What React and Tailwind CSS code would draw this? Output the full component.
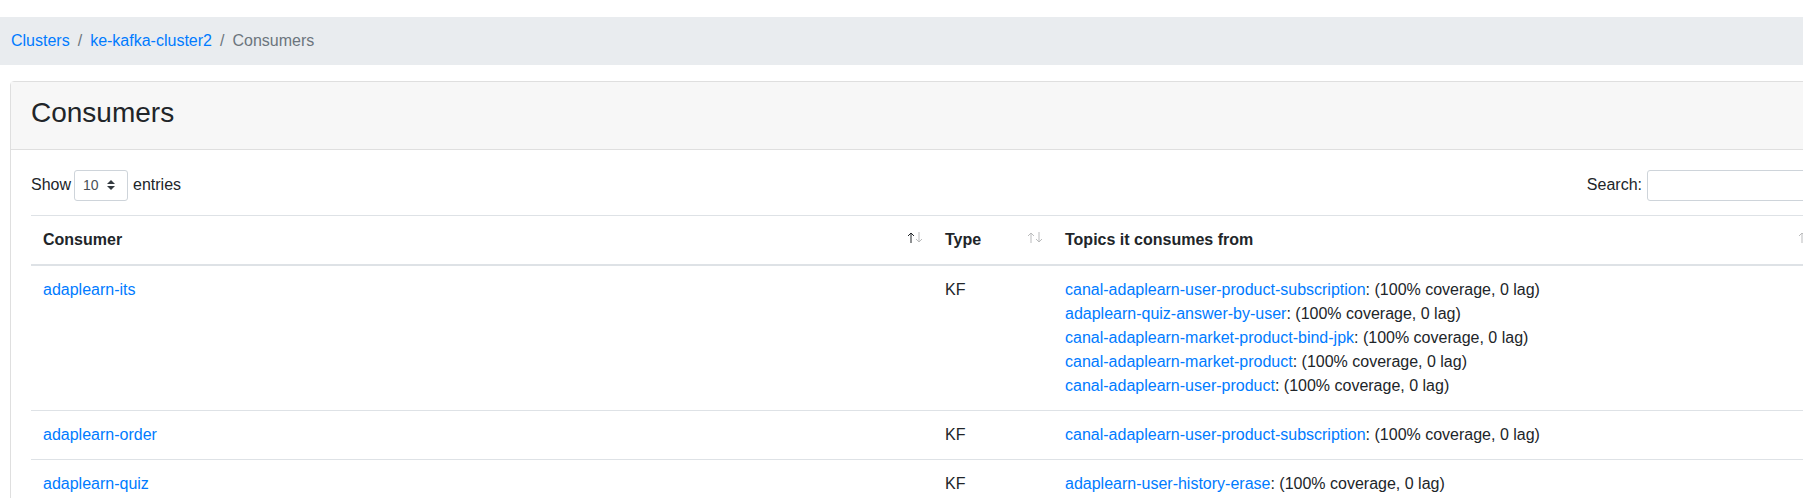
import React from "react";

const font = "font-['Liberation_Sans','Segoe_UI',Arial,sans-serif]";

function Arrow({ up, dim }) {
  return (
    <svg width="8" height="11" viewBox="0 0 8 11" className={dim ? "opacity-30" : ""}>
      {up ? (
        <path d="M4 1V11M1 4L4 1L7 4" stroke="#212529" strokeWidth="1" fill="none" />
      ) : (
        <path d="M4 0V10M1 7L4 10L7 7" stroke="#212529" strokeWidth="1" fill="none" />
      )}
    </svg>
  );
}

function SortIcon({ active }) {
  return (
    <span className="flex items-end mr-[10px] mb-[9px] shrink-0">
      <Arrow up dim={!active} />
      <Arrow dim />
    </span>
  );
}

function Topic({ name }) {
  return (
    <div>
      <a className="text-[#007bff]" href="#">{name}</a>
      <span>: (100% coverage, 0 lag)</span>
    </div>
  );
}

const rows = [
  {
    name: "adaplearn-its",
    type: "KF",
    topics: [
      "canal-adaplearn-user-product-subscription",
      "adaplearn-quiz-answer-by-user",
      "canal-adaplearn-market-product-bind-jpk",
      "canal-adaplearn-market-product",
      "canal-adaplearn-user-product",
    ],
  },
  { name: "adaplearn-order", type: "KF", topics: ["canal-adaplearn-user-product-subscription"] },
  { name: "adaplearn-quiz", type: "KF", topics: ["adaplearn-user-history-erase"] },
];

export default function App() {
  return (
    <div className={`w-[1803px] h-[498px] overflow-hidden bg-white text-[16px] leading-6 text-[#212529] ${font}`}>
      <div className="w-[1855px] pt-[17px]">
        <nav className="h-[48px] bg-[#e9ecef] flex items-center pl-[11px] mb-4">
          <a href="#" className="text-[#007bff]">Clusters</a>
          <span className="text-[#6c757d] px-2">/</span>
          <a href="#" className="text-[#007bff]">ke-kafka-cluster2</a>
          <span className="text-[#6c757d] px-2">/</span>
          <span className="text-[#6c757d]">Consumers</span>
        </nav>

        <div className="mx-[10px] border border-[#dfdfdf] rounded-[4px] bg-white">
          <div className="bg-[#f7f7f7] border-b border-[#dfdfdf] px-5 pt-[14px] pb-[11px]">
            <h3 className="text-[28px] leading-[1.2] font-normal mb-2 text-[#212529]">Consumers</h3>
          </div>
          <div className="px-5 pt-5">
            <div className="flex justify-between items-start h-[45px]">
              <div className="flex items-center h-[31px]">
                <span>Show</span>
                <div className="ml-[3px] mr-[5px] w-[54px] h-[31px] border border-[#ced4da] rounded-[3px] flex items-center pl-2 pr-3 justify-between text-[14px] text-[#495057]">
                  <span>10</span>
                  <svg width="8" height="10" viewBox="0 0 4 5">
                    <path fill="#343a40" d="M2 0L0 2h4zm0 5L0 3h4z" />
                  </svg>
                </div>
                <span>entries</span>
              </div>
              <div className="flex items-center h-[31px]">
                <span>Search:</span>
                <div className="ml-[5px] w-[177px] h-[31px] border border-[#ced4da] rounded-[3px]"></div>
              </div>
            </div>
            <table className="w-[1793px] table-fixed border-collapse">
              <colgroup>
                <col className="w-[902px]" />
                <col className="w-[120px]" />
                <col />
              </colgroup>
              <thead>
                <tr>
                  <th className="border-t border-b-2 border-[#dee2e6] p-0 text-left align-bottom font-bold">
                    <div className="flex items-end pl-3 pt-3 pb-3">
                      <span className="flex-1">Consumer</span>
                      <SortIcon active />
                    </div>
                  </th>
                  <th className="border-t border-b-2 border-[#dee2e6] p-0 text-left align-bottom font-bold">
                    <div className="flex items-end pl-3 pt-3 pb-3">
                      <span className="flex-1">Type</span>
                      <SortIcon />
                    </div>
                  </th>
                  <th className="border-t border-b-2 border-[#dee2e6] p-0 text-left align-bottom font-bold">
                    <div className="flex items-end pl-3 pt-3 pb-3">
                      <span className="flex-1">Topics it consumes from</span>
                      <SortIcon />
                    </div>
                  </th>
                </tr>
              </thead>
              <tbody>
                {rows.map((r) => (
                  <tr key={r.name}>
                    <td className="border-t border-[#dee2e6] p-3 align-top">
                      <a href="#" className="text-[#007bff]">{r.name}</a>
                    </td>
                    <td className="border-t border-[#dee2e6] p-3 align-top">{r.type}</td>
                    <td className="border-t border-[#dee2e6] p-3 align-top">
                      {r.topics.map((t) => (
                        <Topic key={t} name={t} />
                      ))}
                    </td>
                  </tr>
                ))}
              </tbody>
            </table>
          </div>
        </div>
      </div>
    </div>
  );
}
